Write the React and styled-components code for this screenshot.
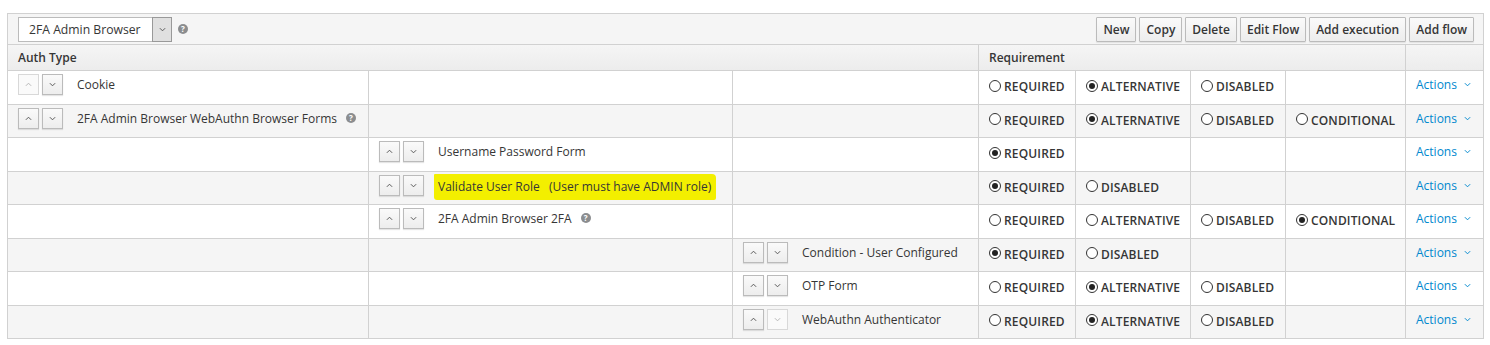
import React from 'react';
import styled, { createGlobalStyle } from 'styled-components';

const GlobalStyle = createGlobalStyle`
  body {
    margin: 0;
    padding: 13px 0 0 7px;
    background: #fff;
    font-family: "Open Sans", "Liberation Sans", sans-serif;
    font-size: 12px;
    color: #363636;
  }
`;

const columns = [361, 364, 246, 97, 115, 95, 120, 78];

const rows = [
  { level: 0, name: 'Cookie', upDisabled: true, reqs: ['REQUIRED', 'ALTERNATIVE', 'DISABLED'], checked: 'ALTERNATIVE' },
  { level: 0, name: '2FA Admin Browser WebAuthn Browser Forms', help: true, reqs: ['REQUIRED', 'ALTERNATIVE', 'DISABLED', 'CONDITIONAL'], checked: 'ALTERNATIVE' },
  { level: 1, name: 'Username Password Form', reqs: ['REQUIRED'], checked: 'REQUIRED' },
  { level: 1, name: 'Validate User Role   (User must have ADMIN role)', marked: true, reqs: ['REQUIRED', 'DISABLED'], checked: 'REQUIRED' },
  { level: 1, name: '2FA Admin Browser 2FA', help: true, reqs: ['REQUIRED', 'ALTERNATIVE', 'DISABLED', 'CONDITIONAL'], checked: 'CONDITIONAL' },
  { level: 2, name: 'Condition - User Configured', reqs: ['REQUIRED', 'DISABLED'], checked: 'REQUIRED' },
  { level: 2, name: 'OTP Form', reqs: ['REQUIRED', 'ALTERNATIVE', 'DISABLED'], checked: 'ALTERNATIVE' },
  { level: 2, name: 'WebAuthn Authenticator', downDisabled: true, reqs: ['REQUIRED', 'ALTERNATIVE', 'DISABLED'], checked: 'ALTERNATIVE' },
];

const toolbarButtons = ['New', 'Copy', 'Delete', 'Edit Flow', 'Add execution', 'Add flow'];

function Chevron({ up, color = '#363636', size = 7 }) {
  return (
    <svg width={size} height={Math.ceil(size / 2) + 1} viewBox="0 0 8 5">
      <polyline
        points={up ? '1,4 4,1 7,4' : '1,1 4,4 7,1'}
        fill="none"
        stroke={color}
        strokeWidth="1.1"
      />
    </svg>
  );
}

function Radio({ label, checked }) {
  return (
    <RadioLabel>
      <RadioCircle $checked={checked} />
      {label}
    </RadioLabel>
  );
}

function Execution({ row }) {
  return (
    <ExecCell>
      <MoveButton $disabled={row.upDisabled}>
        <Chevron up color={row.upDisabled ? '#b5b5b5' : '#555'} />
      </MoveButton>
      <MoveButton $disabled={row.downDisabled}>
        <Chevron color={row.downDisabled ? '#b5b5b5' : '#555'} />
      </MoveButton>
      {row.marked ? <Marker>{row.name}</Marker> : <ExecName>{row.name}</ExecName>}
      {row.help && <HelpIcon $lift={1}>?</HelpIcon>}
    </ExecCell>
  );
}

export default function App() {
  return (
    <>
      <GlobalStyle />
      <Table>
        <colgroup>
          {columns.map((w, i) => (
            <col key={i} style={{ width: w }} />
          ))}
        </colgroup>
        <thead>
          <ToolbarRow>
            <td colSpan={8}>
              <Toolbar>
                <SelectWrap>
                  <SelectBox>2FA Admin Browser</SelectBox>
                  <SelectArrow>
                    <Chevron color="#555" />
                  </SelectArrow>
                  <HelpIcon $lift={1}>?</HelpIcon>
                </SelectWrap>
                <Buttons>
                  {toolbarButtons.map((b) => (
                    <ToolButton key={b}>{b}</ToolButton>
                  ))}
                </Buttons>
              </Toolbar>
            </td>
          </ToolbarRow>
          <HeaderRow>
            <HeadCell colSpan={3}>Auth Type</HeadCell>
            <HeadCell colSpan={4} $bordered>Requirement</HeadCell>
            <HeadCell $bordered />
          </HeaderRow>
        </thead>
        <tbody>
          {rows.map((row, i) => (
            <Row key={i} $striped={i % 2 === 1}>
              {[0, 1, 2].map((lvl) => (
                <Cell key={lvl}>{row.level === lvl && <Execution row={row} />}</Cell>
              ))}
              {[0, 1, 2, 3].map((k) => (
                <Cell key={`r${k}`}>
                  {row.reqs[k] && <Radio label={row.reqs[k]} checked={row.reqs[k] === row.checked} />}
                </Cell>
              ))}
              <Cell>
                <Actions>
                  Actions
                  <Chevron color="#0088ce" size={7} />
                </Actions>
              </Cell>
            </Row>
          ))}
        </tbody>
      </Table>
    </>
  );
}

const Table = styled.table`
  width: 1476px;
  border-collapse: collapse;
  table-layout: fixed;
  border: 1px solid #d1d1d1;
`;

const ToolbarRow = styled.tr`
  background: #f5f5f5;
  td {
    padding: 2px 9px 2px 10px;
    height: 26px;
    border-bottom: 1px solid #d1d1d1;
  }
`;

const Toolbar = styled.div`
  display: flex;
  justify-content: space-between;
  align-items: center;
`;

const SelectWrap = styled.div`
  display: flex;
  align-items: center;
`;

const SelectBox = styled.div`
  width: 134px;
  height: 25px;
  box-sizing: border-box;
  padding: 0 10px;
  line-height: 23px;
  background: #fff;
  border: 1px solid #bbb;
  border-right: none;
  font-size: 12.2px;
`;

const SelectArrow = styled.div`
  width: 20px;
  height: 25px;
  box-sizing: border-box;
  border: 1px solid #999;
  background: #e0e0e0;
  display: flex;
  align-items: center;
  justify-content: center;
  margin-right: 6px;
`;

const HelpIcon = styled.span`
  display: inline-flex;
  align-items: center;
  justify-content: center;
  width: 10px;
  height: 10px;
  border-radius: 50%;
  background: #8b8d8f;
  color: #fff;
  font-size: 8px;
  font-weight: 700;
  line-height: 1;
  margin-bottom: ${(p) => p.$lift}px;
`;

const Buttons = styled.div`
  display: flex;
  gap: 3px;
`;

const ToolButton = styled.button`
  height: 25px;
  padding: 0 6px;
  border: 1px solid #bbb;
  border-radius: 1px;
  background: linear-gradient(#fafafa, #ededed);
  box-shadow: 0 1px 1px rgba(3, 3, 3, 0.08);
  font-family: "Open Sans", "Liberation Sans", sans-serif;
  font-size: 12px;
  font-weight: 600;
  color: #363636;
`;

const HeaderRow = styled.tr`
  background: linear-gradient(#f5f5f5, #ececec);
`;

const HeadCell = styled.th`
  height: 25px;
  padding: 0 10px;
  text-align: left;
  font-weight: 600;
  font-size: 12px;
  border-bottom: 1px solid #d1d1d1;
  border-left: ${(p) => (p.$bordered ? '1px solid #d1d1d1' : 'none')};
`;

const Row = styled.tr`
  background: ${(p) => (p.$striped ? '#f5f5f5' : '#fff')};
`;

const Cell = styled.td`
  height: 33.5px;
  box-sizing: border-box;
  padding: 0 10px;
  vertical-align: middle;
  border: 1px solid #d1d1d1;
  white-space: nowrap;
  overflow: visible;
`;

const ExecCell = styled.div`
  display: flex;
  align-items: center;
  gap: 3px;
  margin-top: -5px;
`;

const MoveButton = styled.span`
  display: inline-flex;
  align-items: center;
  justify-content: center;
  width: 21px;
  height: 21px;
  box-sizing: border-box;
  border: 1px solid ${(p) => (p.$disabled ? '#d8d8d8' : '#bbb')};
  background: ${(p) => (p.$disabled ? '#fafafa' : 'linear-gradient(#fafafa, #ededed)')};
  box-shadow: ${(p) => (p.$disabled ? 'none' : '0 1px 1px rgba(3, 3, 3, 0.1)')};
`;

const ExecName = styled.span`
  margin-left: 11px;
  margin-right: 6px;
  white-space: pre;
`;

const Marker = styled.span`
  margin-left: 7px;
  padding: 4px 5px 5px 4px;
  margin-top: 4px;
  background: #f3ef00;
  border-radius: 1px 4px 2px 3px;
  white-space: pre;
`;

const RadioLabel = styled.label`
  display: inline-flex;
  align-items: center;
  gap: 3px;
  font-size: 12px;
  font-weight: 600;
  letter-spacing: 0.15px;
  margin-top: -2px;
`;

const RadioCircle = styled.span`
  width: 12px;
  height: 12px;
  box-sizing: border-box;
  border-radius: 50%;
  border: 1px solid #333;
  background: #fff;
  position: relative;
  margin-top: -2px;
  &::after {
    content: '';
    display: ${(p) => (p.$checked ? 'block' : 'none')};
    position: absolute;
    top: 2px;
    left: 2px;
    width: 6px;
    height: 6px;
    border-radius: 50%;
    background: #222;
  }
`;

const Actions = styled.span`
  display: inline-flex;
  align-items: center;
  gap: 7px;
  color: #0088ce;
  margin-top: -8px;
  vertical-align: middle;
`;
